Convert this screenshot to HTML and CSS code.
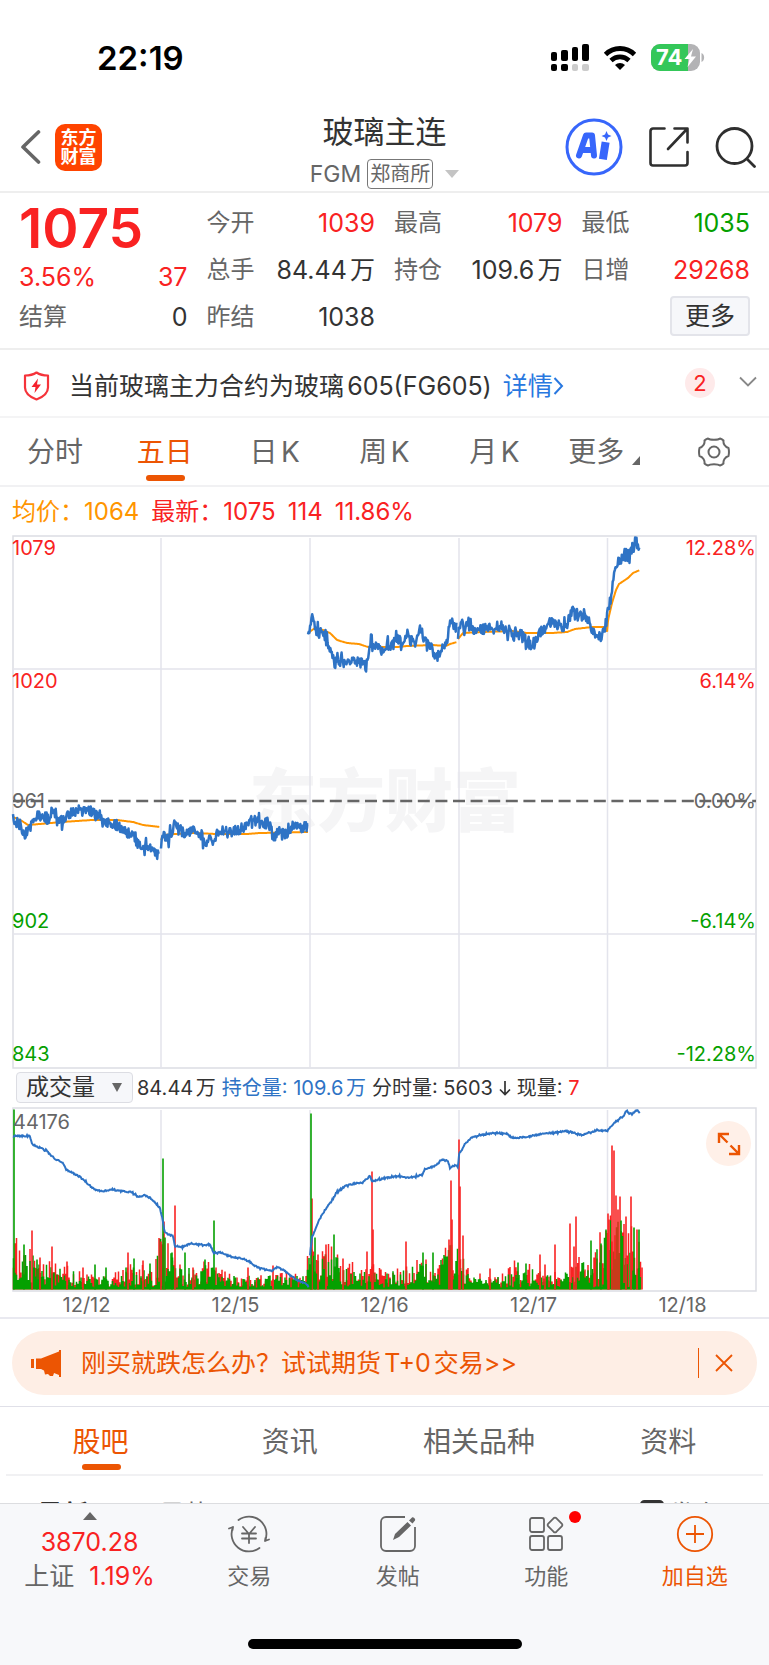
FILE: index.html
```html
<!DOCTYPE html>
<html lang="zh-CN">
<head>
    <meta charset="UTF-8">
    <meta name="viewport" content="width=device-width, initial-scale=1.0">
    <title>玻璃主连</title>
    <link rel="stylesheet" href="styles.css">
</head>
<body>
    <div class="status-bar">
        <span class="time">22:19</span>
        <div class="status-icons">
            <svg width="38" height="28" viewBox="0 0 38 28">
                <rect x="0" y="8" width="6" height="9" rx="2"/>
                <rect x="10" y="6" width="7" height="11" rx="2"/>
                <rect x="21" y="3" width="6" height="14" rx="2"/>
                <rect x="31" y="0" width="7" height="17" rx="2"/>
                <rect x="0" y="20" width="6" height="7" rx="2"/>
                <rect x="10" y="20" width="7" height="7" rx="2"/>
                <rect x="21" y="20" width="6" height="7" rx="2" fill="#ccc"/>
                <rect x="31" y="20" width="7" height="7" rx="2" fill="#ccc"/>
            </svg>
            <svg width="34" height="26" viewBox="0 0 34 26">
                <path d="M2.5 9.5a20.500 20.500 0 0 1 29 0" fill="none" stroke="#000" stroke-width="4.800"/>
                <path d="M8 15.500a13 13 0 0 1 18 0" fill="none" stroke="#000" stroke-width="4.600"/>
                <path d="M17 25l-5-5a7.200 7.200 0 0 1 10 0z"/>
            </svg>
            <svg class="battery" width="54" height="28" viewBox="0 0 54 28">
                <clipPath id="cell"><rect width="49" height="27" rx="9"/></clipPath>
                <g clip-path="url(#cell)">
                    <rect width="49" height="27" fill="#b3b3b5"/>
                    <rect width="37" height="27" fill="#34c759"/>
                </g>
                <path d="M50.500 9c3.500 1.500 3.500 7.500 0 9z" fill="#b3b3b5"/>
                <text x="5" y="21" class="battery-text">74</text>
                <path d="M42 5l-8.500 10h5l-2 8 8.500-10.500h-5z" fill="#fff"/>
            </svg>
        </div>
    </div>

    <header class="header">
        <div class="header-side">
            <button class="icon-button" aria-label="返回">
                <svg width="21" height="34" viewBox="0 0 21 34"><path d="M18.500 2L3 17l15.500 15" fill="none" stroke="#666" stroke-width="3.600" stroke-linecap="round" stroke-linejoin="round"/></svg>
            </button>
            <div class="logo">东方<br>财富</div>
        </div>
        <div class="header-title">
            <h1>玻璃主连</h1>
            <div class="subtitle">
                <span>FGM</span>
                <span class="exchange">郑商所</span>
                <svg width="14" height="8" viewBox="0 0 14 8"><path d="M0 0h14L7 8z" fill="#c4c4c4"/></svg>
            </div>
        </div>
        <div class="header-side header-actions">
            <button class="icon-button" aria-label="Ai">
                <svg width="58" height="58" viewBox="0 0 58 58">
                    <circle cx="29" cy="29" r="27" fill="#fff" stroke="#3766fb" stroke-width="3"/>
                    <path d="M14 37.500l7-20h6l2 20M17.500 32h10" fill="none" stroke="#3766fb" stroke-width="6" stroke-linejoin="round" stroke-linecap="round"/>
                    <path d="M40 28l-1.500 9.500" stroke="#3766fb" stroke-width="8" stroke-linecap="square"/>
                    <path d="M41.500 13l1.500 3.500 3.500 1.500-3.500 1.500-1.500 3.500-1.500-3.500-3.500-1.500 3.500-1.500z" fill="#3766fb"/>
                </svg>
            </button>
            <button class="icon-button" aria-label="分享">
                <svg width="40" height="40" viewBox="0 0 40 40" fill="none" stroke="#2f2f2f" stroke-width="2.600" stroke-linecap="round" stroke-linejoin="round">
                    <path d="M15.500 1.500H4A2.500 2.500 0 0 0 1.500 4v32A2.500 2.500 0 0 0 4 38.500h32a2.500 2.500 0 0 0 2.500-2.500V25M25.500 1.500h13v14M38 2L19 22"/>
                </svg>
            </button>
            <button class="icon-button" aria-label="搜索">
                <svg width="41" height="41" viewBox="0 0 41 41" fill="none" stroke="#2f2f2f" stroke-width="2.800" stroke-linecap="round"><circle cx="19.500" cy="19" r="17.500"/><path d="M32 32l7.500 7.500"/></svg>
            </button>
        </div>
    </header>

    <section class="quote">
        <div class="quote-col quote-main">
            <div class="price red">1075</div>
            <div class="quote-row red"><span>3.56%</span><span>37</span></div>
            <div class="quote-row"><span class="name">结算</span><span>0</span></div>
        </div>
        <div class="quote-col">
            <div class="quote-row"><span class="name">今开</span><span class="red">1039</span></div>
            <div class="quote-row"><span class="name">总手</span><span>84.44万</span></div>
            <div class="quote-row"><span class="name">昨结</span><span>1038</span></div>
        </div>
        <div class="quote-col">
            <div class="quote-row"><span class="name">最高</span><span class="red">1079</span></div>
            <div class="quote-row"><span class="name">持仓</span><span>109.6万</span></div>
        </div>
        <div class="quote-col">
            <div class="quote-row"><span class="name">最低</span><span class="green">1035</span></div>
            <div class="quote-row"><span class="name">日增</span><span class="red">29268</span></div>
            <button class="more-button">更多</button>
        </div>
    </section>

    <section class="notice">
        <svg width="27" height="30" viewBox="0 0 27 30">
            <path d="M13.500 1.500c3 2 7 3 11.500 3v12c0 6-5 9.500-11.500 12C7 26 2 22.500 2 16.500v-12c4.500 0 8.500-1 11.500-3z" fill="none" stroke="#f5333a" stroke-width="2.200" stroke-linejoin="round"/>
            <path d="M15 7.500l-6.500 8.500h4L11.500 22l6.500-8.500h-4z" fill="#f5222d"/>
        </svg>
        <p>当前玻璃主力合约为玻璃605(FG605)</p>
        <a href="#">详情<svg width="11" height="22" viewBox="0 0 11 22"><path d="M1.500 3l7.500 8-7.500 8" fill="none" stroke="#2878e0" stroke-width="2"/></svg></a>
        <span class="count">2</span>
        <button class="icon-button expand-notice" aria-label="展开">
            <svg width="18" height="11" viewBox="0 0 18 11"><path d="M1 1.500l8 8 8-8" fill="none" stroke="#888" stroke-width="1.800"/></svg>
        </button>
    </section>

    <nav class="period-tabs">
        <button>分时</button>
        <button class="active">五日</button>
        <button>日K</button>
        <button>周K</button>
        <button>月K</button>
        <button class="period-more">更多<svg width="8" height="9" viewBox="0 0 8 9"><path d="M8 0v9H0z" fill="#666"/></svg></button>
        <button aria-label="设置">
            <svg width="32" height="30" viewBox="0 0 32 30" fill="none" stroke="#666" stroke-width="2">
                <path d="M10 1.500c2 1.800 10 1.800 12 0 1.500.5 2.500 1 3.500 2-.5 3 1.500 6.500 5 7.500.6 2.500.6 5.500 0 8-3.500 1-5.500 4.500-5 7.500-1 1-2 1.500-3.500 2-2-1.800-10-1.800-12 0-1.500-.5-2.500-1-3.500-2 .5-3-1.500-6.500-5-7.500-.6-2.500-.6-5.500 0-8 3.500-1 5.500-4.500 5-7.500 1-1 2-1.500 3.500-2z" stroke-linejoin="round"/>
                <circle cx="16" cy="15" r="5.500"/>
            </svg>
        </button>
    </nav>

    <section class="charts">
        <div class="legend">
            <span class="orange">均价：1064</span>
            <span class="red">最新：1075</span>
            <span class="red">114</span>
            <span class="red">11.86%</span>
        </div>

        <svg class="chart" id="priceChart" viewBox="0 0 745 534">
            <text x="373" y="291" class="watermark">东方财富</text>
            <path class="frame" d="M1 1h743v532H1z"/>
            <path class="grid" d="M149 3v530M298 3v530M447 3v530M595.500 3v530M1 134h743M1 399h743"/>
            <path d="M1 266h743" stroke="#666" stroke-width="2.500" stroke-dasharray="12 5.600"/>
            <path id="avgLine" class="line avg"/>
            <path id="priceLine" class="line price-line"/>
            <text x="0" y="20" class="red">1079</text>
            <text x="0" y="153">1020</text>
            <text x="0" y="273" class="gray">961</text>
            <text x="0" y="393" class="green">902</text>
            <text x="0" y="526" class="green">843</text>
            <text x="744" y="20" class="end">12.28%</text>
            <text x="744" y="153" class="end">6.14%</text>
            <text x="744" y="273" class="end gray">0.00%</text>
            <text x="744" y="393" class="end green">-6.14%</text>
            <text x="744" y="526" class="end green">-12.28%</text>
        </svg>

        <div class="indicator">
            <div class="indicator-select">
                <select aria-label="指标"><option>成交量</option></select>
                <svg width="10" height="9" viewBox="0 0 10 9"><path d="M0 0h10L5 9z" fill="#666"/></svg>
            </div>
            <span>84.44万</span>
            <span class="blue"><span class="label">持仓量:</span> 109.6万</span>
            <span><span class="label">分时量:</span> 5603</span>
            <svg width="12" height="15" viewBox="0 0 12 15"><path d="M6 0v13M1 8.500l5 5 5-5" fill="none" stroke="#333" stroke-width="1.700"/></svg>
            <span><span class="label">现量:</span> <span class="red">7</span></span>
        </div>

        <div class="volume">
            <svg class="chart" viewBox="0 0 745 185">
                <path class="frame" d="M1 1h743v183H1z"/>
                <path class="grid" d="M149 3v180M298 3v180M447 3v180M595.500 3v180"/>
                <path id="redBars" class="bars"/>
                <path id="greenBars" class="bars"/>
                <g id="spikes"></g>
                <path id="openInterest" class="line interest-line"/>
                <text x="1" y="22" class="gray">44176</text>
            </svg>
            <button class="expand" aria-label="全屏">
                <svg width="24" height="24" viewBox="0 0 24 24" fill="none" stroke="#ec5503" stroke-width="2.400"><path d="M2 11V2h10M2 2l8.500 8.500M22 13v9H12M22 22l-8.500-8.500"/></svg>
            </button>
        </div>
        <div class="dates"><span>12/12</span><span>12/15</span><span>12/16</span><span>12/17</span><span>12/18</span></div>
    </section>

    <section class="promo-wrap">
        <div class="promo">
            <svg width="30" height="27" viewBox="0 0 30 27" fill="#ec5503"><path d="M0 9h3v9H0zM5 8.500h5L28 1.500V0h2v27h-2v-2l-5-2-1 3h-3l-2-2-3 .500-1-4-3-1.500H5z"/></svg>
            <a href="#">刚买就跌怎么办？试试期货T+0交易&gt;&gt;</a>
            <button class="icon-button" aria-label="关闭">
                <svg width="18" height="18" viewBox="0 0 18 18"><path d="M1 1l16 16M17 1L1 17" stroke="#ec5503" stroke-width="1.800"/></svg>
            </button>
        </div>
    </section>

    <nav class="content-tabs">
        <button class="active">股吧</button>
        <button>资讯</button>
        <button>相关品种</button>
        <button>资料</button>
    </nav>

    <div class="feed-filter">
        <b>最新</b>
        <span>最热</span>
        <svg width="24" height="24" viewBox="0 0 24 24"><rect x="1.500" y="1.500" width="21" height="21" rx="3" fill="none" stroke="#333" stroke-width="3"/></svg>
        <span>发布</span>
    </div>

    <footer class="bottom-bar">
        <div class="bottom-items">
            <div class="index">
                <svg width="14" height="8" viewBox="0 0 14 8"><path d="M7 0l7 8H0z" fill="#666"/></svg>
                <span class="red">3870.28</span>
                <span>上证 <span class="red change">1.19%</span></span>
            </div>
            <button>
                <svg width="44" height="38" viewBox="0 0 44 38" fill="none" stroke="#666" stroke-width="1.800" stroke-linecap="round" stroke-linejoin="round">
                    <path d="M11.500 5A17.500 17.500 0 0 1 38 26l4-1.500M32.500 33A17.500 17.500 0 0 1 6 12L2 13.500M38 26l.5-3M6 12l-.5 3M16 12l6 7 6-7M22 19v9M15 18.500h14M15 23.500h14"/>
                </svg>
                交易
            </button>
            <button>
                <svg width="38" height="38" viewBox="0 0 38 38">
                    <path d="M26 2H7a5 5 0 0 0-5 5v24a5 5 0 0 0 5 5h24a5 5 0 0 0 5-5V12" fill="none" stroke="#666" stroke-width="1.800"/>
                    <path d="M14 25l2-6L28.500 7l3.500 3.500L20 22zM30 5.500l3-3c1-1 4 1.500 3 3l-2.500 3z" fill="#666"/>
                </svg>
                发帖
            </button>
            <button>
                <svg width="38" height="38" viewBox="0 0 38 38" fill="none" stroke="#666" stroke-width="1.800">
                    <rect x="3" y="3" width="14" height="14" rx="2"/><rect x="3" y="21" width="14" height="14" rx="2"/><rect x="21" y="21" width="14" height="14" rx="2"/>
                    <path d="M26.500 3.300q1.500-1.300 3 0l5.200 5.200q1.300 1.500 0 3l-5.200 5.200q-1.500 1.300-3 0l-5.200-5.200q-1.300-1.500 0-3z"/>
                </svg>
                <i class="dot"></i>
                功能
            </button>
            <button class="orange-text">
                <svg width="38" height="38" viewBox="0 0 38 38" fill="none" stroke="#ec5503" stroke-width="1.800"><circle cx="19" cy="19" r="17.200"/><path d="M19 10v18M10 19h18"/></svg>
                加自选
            </button>
        </div>
        <div class="home-indicator"></div>
    </footer>

    <script src="script.js"></script>
</body>
</html>
```

FILE: styles.css
```css
* {
    box-sizing: border-box;
}

body {
    margin: 0;
    background-color: #fff;
    color: #333;
    font-family: Inter, "Noto Sans CJK SC", sans-serif;
    font-size: 24px;
    line-height: 32px;
    text-autospace: normal;
}

button {
    padding: 0;
    border: none;
    background: none;
    color: inherit;
    font: inherit;
    cursor: pointer;
}

a {
    text-decoration: none;
}

svg {
    display: block;
    flex: none;
}

.red {
    color: #f92222;
}

.green {
    color: #05a000;
}

.orange {
    color: #ff9500;
}

.blue {
    color: #2e73c5;
}

/* status bar */
.status-bar {
    display: flex;
    justify-content: space-between;
    align-items: center;
    height: 111px;
    padding: 4px 64px 0 97px;
}

.time {
    color: #000;
    font-size: 33px;
    font-weight: 600;
}

.status-icons {
    display: flex;
    align-items: center;
    gap: 14px;
}

.battery-text {
    fill: #fff;
    font-size: 22px;
    font-weight: 700;
}

/* header */
.header {
    display: flex;
    height: 82px;
    border-bottom: 2px solid #eee;
}

.header-side {
    display: flex;
    flex: 1;
    align-items: center;
    gap: 14px;
    padding: 0 13px 8px 20px;
}

.header-actions {
    justify-content: flex-end;
    gap: 26px;
}

.icon-button {
    display: block;
}

.logo {
    width: 47px;
    height: 47px;
    padding-top: 4px;
    border-radius: 10px;
    background-color: #ff4400;
    color: #fff;
    font-size: 18px;
    font-weight: 700;
    line-height: 19px;
    text-align: center;
}

.header-title {
    text-align: center;
}

h1 {
    margin: 0 0 6px;
    font-size: 31px;
    font-weight: 400;
    line-height: 42px;
}

.subtitle {
    display: flex;
    align-items: center;
    gap: 6px;
    color: #666;
    font-size: 23px;
    line-height: 30px;
}

.exchange {
    height: 30px;
    padding: 0 2px;
    border: 1px solid #777;
    border-radius: 4px;
    font-size: 20px;
    line-height: 28px;
}

.subtitle svg {
    margin-left: 6px;
}

/* quote */
.quote {
    display: grid;
    grid-template-columns: repeat(4, 1fr);
    gap: 19px;
    padding: 6px 19px 8px;
    border-bottom: 2px solid #eee;
    font-size: 25px;
}

.quote-row {
    display: flex;
    justify-content: space-between;
    align-items: center;
    height: 47px;
}

.name {
    color: #666;
    font-size: 24px;
}

.price {
    font-size: 55px;
    font-weight: 600;
    line-height: 58px;
}

.quote-main .quote-row {
    height: 40px;
}

.more-button {
    display: block;
    width: 80px;
    height: 40px;
    margin: 3px 0 0 auto;
    border: 2px solid #e3e4ea;
    border-radius: 4px;
    background-color: #f6f7fa;
    line-height: 36px;
}

/* notice */
.notice {
    display: flex;
    align-items: center;
    height: 68px;
    padding: 6px 12px 0 23px;
    border-bottom: 2px solid #f4f4f5;
    font-size: 25px;
}

.notice p {
    margin: 0 11px 0 19px;
}

.notice a {
    display: flex;
    align-items: center;
    color: #2878e0;
}

.count {
    width: 30px;
    height: 30px;
    margin: 0 24px 6px auto;
    border-radius: 50%;
    background-color: #feeaea;
    color: #f92222;
    font-size: 22px;
    line-height: 30px;
    text-align: center;
}

.expand-notice {
    padding-bottom: 9px;
}

/* tabs */
.period-tabs,
.content-tabs {
    display: flex;
    height: 69px;
    border-bottom: 2px solid #f1f1f3;
    color: #666;
    font-size: 28px;
}

.period-tabs button,
.content-tabs button {
    position: relative;
    display: flex;
    flex: 1;
    justify-content: center;
    align-items: center;
}

.period-tabs .active,
.content-tabs .active {
    color: #ec5503;
}

.active::after {
    content: "";
    position: absolute;
    bottom: 4px;
    left: 50%;
    width: 39px;
    height: 6px;
    margin-left: -19px;
    border-radius: 3px;
    background-color: #ec5503;
}

.period-more svg {
    margin: 18px 0 0 8px;
}

/* charts */
.charts {
    padding: 0 12px;
    border-bottom: 2px solid #e9e9f0;
}

.legend {
    display: flex;
    gap: 12px;
    height: 48px;
    font-size: 24px;
    line-height: 49px;
}

.chart {
    width: 100%;
    height: auto;
    overflow: visible;
}

.chart text {
    fill: #f92222;
    font-size: 20px;
}

.chart .green {
    fill: #05a000;
}

.chart .gray {
    fill: #666;
}

.chart .end {
    text-anchor: end;
}

.chart .watermark {
    fill: #f5f5f6;
    font-size: 68px;
    font-weight: 900;
    text-anchor: middle;
}

.frame,
.grid,
.line,
.bars {
    fill: none;
    stroke: #dcdde3;
    stroke-width: 1.5;
}

.grid {
    stroke: #e3e4ec;
}

.avg {
    stroke: #ff9500;
    stroke-width: 2;
}

.price-line {
    stroke: #2e73c5;
    stroke-width: 2.5;
    stroke-linejoin: round;
}

.interest-line {
    stroke: #2e73c5;
    stroke-width: 2;
}

#redBars {
    stroke: #f92222;
}

#greenBars {
    stroke: #05a000;
}

.indicator {
    display: flex;
    align-items: center;
    gap: 6px;
    height: 38px;
    padding-left: 4px;
    font-size: 20px;
    white-space: nowrap;
}

.label {
    text-autospace: no-autospace;
}

.indicator-select {
    position: relative;
    margin-right: -2px;
}

.indicator-select select {
    width: 117px;
    height: 31px;
    padding: 0 9px;
    border: 1px solid #dcdde3;
    border-radius: 4px;
    background-color: #f6f7fa;
    color: #333;
    appearance: none;
    font-family: inherit;
    font-size: 23px;
    line-height: 29px;
}

.indicator-select svg {
    position: absolute;
    top: 11px;
    right: 11px;
}

.volume {
    position: relative;
}

.expand {
    position: absolute;
    top: 14px;
    right: 6px;
    display: flex;
    justify-content: center;
    align-items: center;
    width: 45px;
    height: 45px;
    border-radius: 50%;
    background-color: #fff0e8;
}

.dates {
    display: flex;
    height: 25px;
    color: #666;
    font-size: 20px;
    line-height: 27px;
    text-align: center;
}

.dates span {
    flex: 1;
}

/* promo */
.promo-wrap {
    padding: 12px 12px 11px;
    border-bottom: 1px solid #e0e0e8;
}

.promo {
    display: flex;
    align-items: center;
    height: 64px;
    padding: 0 24px 0 19px;
    border-radius: 32px;
    background-color: #feeee5;
    font-size: 25px;
}

.promo a {
    margin-left: 20px;
    color: #ec5503;
}

.promo button {
    margin-left: auto;
    padding: 6px 0 6px 16px;
    border-left: 1px solid #ec5503;
}

/* content */
.content-tabs {
    margin: 0 6px;
}

.content-tabs button {
    padding-top: 2px;
}

.feed-filter {
    display: flex;
    height: 27px;
    padding: 20px 48px 0 37px;
    overflow: hidden;
    color: #666;
    font-size: 26px;
    line-height: 38px;
}

.feed-filter b {
    margin-right: 70px;
    color: #333;
}

.feed-filter svg {
    margin: 4px 5px 0 auto;
}

/* bottom bar */
.bottom-bar {
    height: 162px;
    border-top: 1px solid #dcdde0;
    background-color: #f7f8fa;
    color: #666;
}

.bottom-items {
    display: flex;
    height: 135px;
    font-size: 22px;
}

.bottom-items button {
    position: relative;
    display: flex;
    flex: 1;
    flex-direction: column;
    align-items: center;
    gap: 7px;
    padding-top: 11px;
}

.bottom-items .orange-text {
    color: #ec5503;
}

.index {
    display: flex;
    flex-direction: column;
    align-items: center;
    width: 175px;
    padding: 8px 0 0 4px;
    font-size: 25px;
    line-height: 34px;
}

.index svg {
    margin-bottom: 5px;
}

.change {
    margin-left: 8px;
}

.dot {
    position: absolute;
    top: 7px;
    left: 50%;
    width: 12px;
    height: 12px;
    margin-left: 23px;
    border-radius: 50%;
    background-color: #ff0000;
}

.home-indicator {
    width: 274px;
    height: 10px;
    margin: 0 auto;
    border-radius: 5px;
    background-color: #000;
}
```

FILE: script.js
```javascript
// seeded generator so the chart is the same on every load
let seed = 7;
function random() {
    seed = (seed * 16807) % 2147483647;
    return seed / 2147483647;
}

const priceDays = [
    [[1,282],[3,285],[8,292],[13,300],[18,293],[21,283],[31,280],[36,285],[40,277],[46,283],[51,287],[56,278],[68,278],[75,276],[80,276],[85,282],[91,288],[98,288],[105,290],[111,295],[118,298],[125,307],[131,315],[140,312],[147,324]],
    [[149,317],[150,298],[155,302],[160,300],[163,288],[170,295],[175,298],[181,295],[188,297],[193,307],[201,302],[215,293],[221,297],[235,292],[240,284],[248,288],[257,288],[261,302],[270,295],[275,300],[281,291],[296,293]],
    [[296,98],[298,92],[301,82],[305,97],[310,98],[315,108],[320,122],[323,128],[328,127],[336,130],[341,123],[348,128],[355,130],[357,122],[359,103],[365,112],[371,115],[378,110],[385,105],[390,107],[394,98],[400,107],[409,98],[413,107],[419,110],[424,125],[430,113],[434,112],[438,83],[442,92],[445,93]],
    [[446,104],[449,92],[455,92],[468,95],[485,93],[498,95],[503,102],[510,100],[514,110],[523,108],[528,95],[541,88],[555,93],[557,78],[562,75],[566,83],[573,78],[578,90],[583,98],[587,103],[593,95],[595,75],[597,73],[600,55],[602,35],[606,25],[611,25],[616,20],[620,13],[622,15],[624,0],[625,15],[628,13]]
];

const avgDays = [
    [[1,282],[10,286],[16,290],[28,289],[50,287],[80,285],[105,285],[121,287],[131,290],[148,292]],
    [[149,305],[152,300],[163,299],[180,298],[205,299],[235,299],[248,298],[296,297]],
    [[296,98],[303,93],[311,95],[318,98],[325,105],[335,108],[347,109],[356,112],[385,112],[395,111],[420,110],[434,111],[438,109],[445,107]],
    [[446,104],[451,98],[470,97],[500,96],[515,98],[540,98],[555,97],[563,94],[580,92],[594,92],[595,98],[596,85],[600,68],[604,55],[607,49],[616,43],[621,38],[628,35]]
];

const interest = [
    [[1,29],[18,29],[20,37],[35,44],[44,53],[50,55],[55,63],[68,70],[83,83],[90,84],[100,83],[120,85],[126,90],[133,88],[140,92],[148,101],[150,110],[153,126],[161,129],[163,139],[170,140],[178,137],[198,138],[202,146],[208,145],[220,150],[233,152],[245,160],[260,164],[265,160],[273,164],[285,173],[296,178],[297,182]],
    [[298,148],[300,130],[307,113],[313,103],[321,92],[324,86],[333,79],[345,76],[350,76],[358,69],[360,74],[375,71],[388,69],[395,71],[410,68],[413,62],[423,59],[430,53],[436,54],[438,61],[443,58],[446,60],[447,48],[453,37],[460,30],[470,28],[480,26],[495,27],[500,31],[515,30],[530,27],[555,24],[570,28],[585,23],[595,24],[600,18],[608,11],[611,10],[614,4],[620,7],[625,3],[628,6]]
];

const volumeLevel = [[0,44],[20,34],[30,24],[80,13],[100,11],[115,21],[140,21],[150,56],[165,22],[180,22],[200,24],[215,13],[250,11],[280,15],[290,9],[298,42],[310,36],[325,38],[335,24],[370,18],[388,18],[410,26],[425,21],[438,46],[448,40],[455,18],[470,11],[490,11],[500,24],[520,19],[540,15],[550,9],[560,28],[580,26],[598,72],[610,66],[629,38]];

const spikes = [
    [20,59,"r"],[12,45,"g"],[28,32,"r"],[25,30,"g"],[40,43,"r"],[55,28,"r"],[71,22,"r"],[83,25,"g"],[94,22,"g"],[116,37,"r"],[122,31,"g"],[131,29,"r"],[138,26,"g"],[149,48,"r"],[152,68,"r"],[151,131,"g"],[153,52,"g"],[160,37,"g"],[163,84,"r"],[173,37,"g"],[181,22,"r"],[193,30,"g"],[202,69,"g"],[236,22,"r"],[261,24,"r"],
    [300,91,"r"],[299,176,"g"],[303,52,"g"],[306,35,"r"],[314,45,"r"],[322,55,"g"],[331,31,"r"],[355,38,"r"],[361,60,"r"],[360,118,"r"],[394,48,"r"],[411,37,"g"],[421,37,"g"],[437,50,"r"],[440,70,"r"],[439,109,"r"],[448,103,"r"],[447,150,"r"],[451,54,"r"],
    [478,21,"r"],[506,27,"g"],[514,26,"g"],[528,35,"r"],[533,25,"r"],[543,45,"r"],[558,66,"r"],[562,43,"r"],[564,73,"r"],[579,49,"g"],[589,46,"g"],[596,76,"r"],[597,70,"r"],[600,144,"r"],[602,139,"r"],[604,94,"r"],[606,80,"r"],[608,93,"r"],[609,69,"g"],[614,73,"r"],[619,93,"r"],[622,62,"g"],[625,60,"r"],[627,60,"g"],[630,22,"r"],[2,180,"g"]
];

function valueAt(points, x) {
    for (let i = 1; i < points.length; i++) {
        const [x0, y0] = points[i - 1];
        const [x1, y1] = points[i];
        if (x <= x1) {
            return y0 + (y1 - y0) * (x - x0) / (x1 - x0);
        }
    }
    return points[points.length - 1][1];
}

function linePath(points, noise) {
    let d = "";
    const end = points[points.length - 1][0];
    for (let x = points[0][0]; x <= end; x += 0.7) {
        const wide = random() < 0.15 ? 2 : 1;
        const y = valueAt(points, x) + (random() - 0.5) * noise * wide;
        d += (d ? "L" : "M") + x.toFixed(1) + " " + Math.max(1, y).toFixed(1);
    }
    return d;
}

function draw(id, days, noise) {
    document.getElementById(id).setAttribute("d", days.map(day => linePath(day, noise)).join(""));
}

function bar(x, height) {
    return "M" + x + " 182.500v" + (-height).toFixed(1);
}

draw("avgLine", avgDays, 0);
draw("priceLine", priceDays, 11);
draw("openInterest", interest, 1.4);

let red = "";
let green = "";
for (let x = 1.5; x < 630; x += 1.5) {
    const level = valueAt(volumeLevel, x);
    red += bar(x, 2 + level * Math.pow(random(), 1.2) * 1.2);
    green += bar(x, 2 + level * Math.pow(random(), 1.1));
}
document.getElementById("redBars").setAttribute("d", red);
document.getElementById("greenBars").setAttribute("d", green);

document.getElementById("spikes").innerHTML = spikes.map(([x, height, color]) =>
    `<path d="${bar(x, height)}" stroke="${color === "r" ? "#f92222" : "#05a000"}" stroke-width="1.600"/>`
).join("");
```
